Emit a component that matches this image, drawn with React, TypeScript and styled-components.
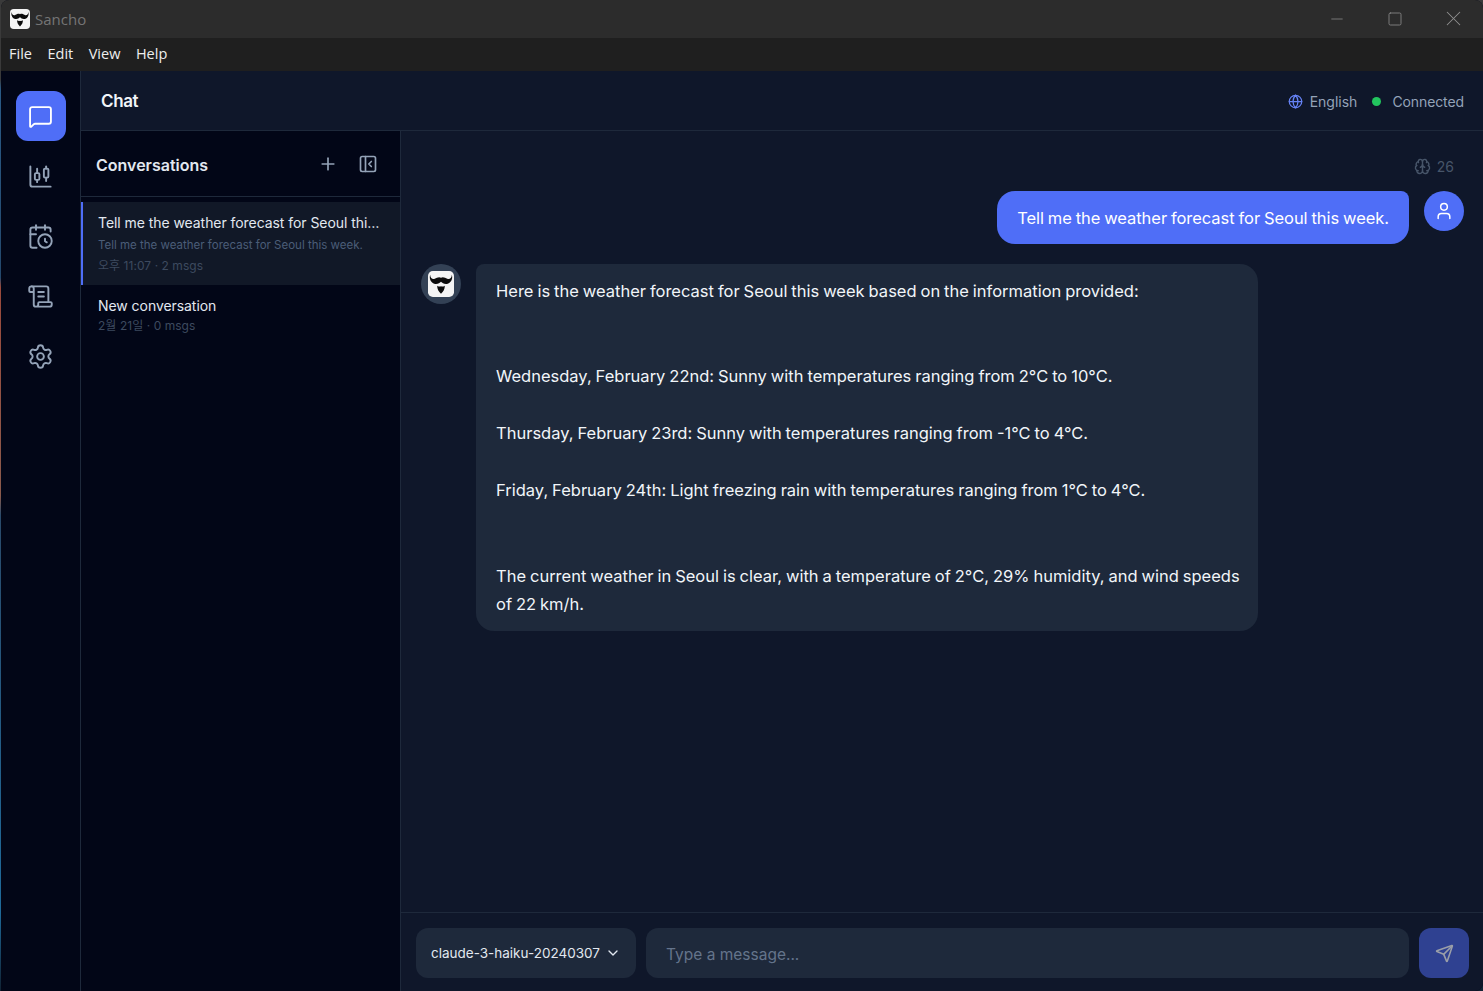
import React from "react";
import styled, { createGlobalStyle } from "styled-components";
import { MessageSquare, ChartCandlestick, CalendarClock, ScrollText, Settings, Plus, PanelLeftClose, Globe, Brain, User, ChevronDown, Send, Minus, Square, X } from "lucide-react";

const Global = createGlobalStyle`
  html, body { margin: 0; padding: 0; height: 100%; overflow: hidden; }
  body {
    font-family: Inter, "Noto Sans CJK KR", sans-serif;
    background: linear-gradient(180deg, #3a3a3a 0, #3a3a3a 8%, #2a5a86 9%, #24486c 28%, #9a4a3c 29%, #8a5a4c 50%, #2a4a6a 52%, #1f6a9a 92%, #123 100%);
  }
`;

const Window = styled.div`
  width: 1482px; height: 991px; margin-left: 1px;
  display: flex; flex-direction: column; overflow: hidden;
  border-radius: 8px 8px 8px 0;
  background: #020617;
`;
const TitleBar = styled.div`
  height: 38px; flex: none; background: #2c2c2c; display: flex; align-items: center;
  padding: 0 1px 0 9px; gap: 5px;
`;
const AppName = styled.span`
  font: 15px "Open Sans", sans-serif; color: #757575; flex: 1;
`;
const WinButton = styled.div`
  width: 58px; height: 38px; flex: none; display: flex; align-items: center; justify-content: center; color: #8f8f8f;
  margin-left: -5px;
  padding-bottom: 1px; box-sizing: border-box;
`;
const MenuBar = styled.div`
  height: 33px; flex: none; box-sizing: border-box; background: #1f1f1f; display: flex; align-items: center; padding: 0 0 3px 8px; gap: 15.5px;
  font: 14.5px "Open Sans", sans-serif; color: #eeeeee;
`;
const Body = styled.div`
  flex: 1; min-height: 0; display: flex;
`;
const Sidebar = styled.nav`
  width: 79px; flex: none; background: #020617; border-right: 1px solid #1e293b;
  display: flex; flex-direction: column; align-items: center; padding-top: 20px; gap: 10px;
`;
const NavButton = styled.div<{ $active?: boolean }>`
  width: 50px; height: 50px; border-radius: 12px; display: flex; align-items: center; justify-content: center;
  background: ${p => (p.$active ? "#4f6ef7" : "transparent")};
  color: ${p => (p.$active ? "#ffffff" : "#94a3b8")};
`;
const Main = styled.div`
  flex: 1; min-width: 0; display: flex; flex-direction: column;
`;
const Header = styled.header`
  height: 60px; flex: none; box-sizing: border-box; background: #0f172a; border-bottom: 1px solid #1e293b;
  display: flex; align-items: center; padding: 1px 19px 0 20px;
`;
const HeaderTitle = styled.h1`
  margin: 0; flex: 1; font-size: 17px; font-weight: 600; color: #f1f5f9; letter-spacing: -0.4px;
`;
const Status = styled.span<{ $tight?: boolean }>`
  display: flex; align-items: center; font-size: 14px; color: #94a3b8;
  letter-spacing: ${p => (p.$tight ? "-0.1px" : "0")};
`;
const LangIcon = styled(Globe)`
  color: #6582f5; margin-right: 7px;
`;
const Dot = styled.span`
  width: 9px; height: 9px; border-radius: 50%; background: #22c55e; margin: 0 11px 0 15px;
`;
const Content = styled.div`
  flex: 1; min-height: 0; display: flex;
`;
const ConvPanel = styled.aside`
  width: 320px; flex: none; box-sizing: border-box; background: #020617; border-right: 1px solid #1e293b;
  display: flex; flex-direction: column;
`;
const ConvHeader = styled.div`
  height: 66px; flex: none; box-sizing: border-box; border-bottom: 1px solid #1e293b; margin-bottom: 5px; display: flex; align-items: center;
  padding: 0 22px 0 15px; gap: 20px; color: #94a3b8;
`;
const ConvTitle = styled.h2`
  margin: 2px 0 0; flex: 1; font-size: 16px; font-weight: 600; color: #e2e8f0;
`;
const ConvItem = styled.div<{ $active?: boolean }>`
  padding: ${p => (p.$active ? "11px 20px 9px 15px" : "11px 20px 9px 17px")};
  border-left: ${p => (p.$active ? "2px solid #4f6ef7" : "none")};
  background: ${p => (p.$active ? "#111827" : "transparent")};
`;
const ConvName = styled.div`
  font-size: 14px; line-height: 19px; color: #e2e8f0; white-space: nowrap; overflow: hidden; text-overflow: ellipsis; letter-spacing: -0.06px;
`;
const ConvPreview = styled.div`
  font-size: 11.5px; line-height: 20px; margin-top: 3px; color: #4b5d78; white-space: nowrap;
`;
const ConvMeta = styled.div`
  font-size: 12px; line-height: 20px; margin-top: 1px; color: #3d4a5f; white-space: nowrap; letter-spacing: 0.05px;
`;
const Chat = styled.section`
  flex: 1; min-width: 0; background: #0f172a; display: flex; flex-direction: column;
`;
const Messages = styled.div`
  flex: 1; min-height: 0; padding: 26px 19px 0 20px; display: flex; flex-direction: column;
`;
const TokenRow = styled.div`
  display: flex; justify-content: flex-end; align-items: center; gap: 6px; height: 18px; padding-right: 10px;
  margin-bottom: 16px; font-size: 14px; color: #475569;
`;
const Row = styled.div<{ $user?: boolean }>`
  display: flex; gap: 15px; align-items: flex-start; justify-content: ${p => (p.$user ? "flex-end" : "flex-start")};
  margin-bottom: 20px;
`;
const Avatar = styled.div<{ $user?: boolean }>`
  width: 40px; height: 40px; border-radius: 50%; flex: none; display: flex; align-items: center; justify-content: center;
  background: ${p => (p.$user ? "#4f6ef7" : "#334155")}; color: #fff;
`;
const Bubble = styled.div<{ $user?: boolean }>`
  font-size: 16.5px; line-height: 28.45px; word-spacing: -0.7px; white-space: pre-wrap;
  padding: ${p => (p.$user ? "12.7px 20px 12.3px" : "12.7px 16px 12.3px 20px")};
  border-radius: ${p => (p.$user ? "18px 8px 18px 18px" : "8px 18px 18px 18px")};
  color: #f1f5f9;
  background: ${p => (p.$user ? "#4f6ef7" : "#1e293b")};
  ${p => (p.$user ? "color:#fff; letter-spacing:-0.05px;" : "width: 782px; box-sizing: border-box;")}
`;
const Composer = styled.div`
  height: 79px; flex: none; box-sizing: border-box; border-top: 1px solid #1e293b; padding: 15px 14px 0 15px; display: flex; gap: 10px;
`;
const ModelSelect = styled.div`
  width: 220px; height: 50px; flex: none; box-sizing: border-box; border-radius: 12px; background: #1e293b; padding: 0 15px;
  display: flex; align-items: center; justify-content: space-between; font-size: 13.5px; color: #e2e8f0; white-space: nowrap;
`;
const MessageInput = styled.div`
  flex: 1; height: 50px; box-sizing: border-box; border-radius: 12px; background: #1e293b; padding: 3px 20px 0;
  display: flex; align-items: center; font-size: 15.5px; color: #64748b;
`;
const SendButton = styled.div`
  width: 50px; height: 50px; border-radius: 12px; background: #2f4191; color: #9a9ea8;
  display: flex; align-items: center; justify-content: center;
`;

const Logo = ({ size }: { size: number }) => (
  <svg width={size} height={size} viewBox="0 0 24 24" aria-hidden>
    <rect width="24" height="24" rx="4.5" fill="#f4f4f4" />
    <path d="M2 3.5C.8 7.5 3 11.3 6.5 11.9 9 12.3 10.8 11 12 9.9 13.2 11 15 12.3 17.5 11.9 21 11.3 23.2 7.5 22 3.5 21.8 6.8 19.8 8 17.8 7.2 15.8 6.3 14 4.9 12 6.2 10 4.9 8.2 6.3 6.2 7.2 4.2 8 2.2 6.8 2 3.5Z" fill="#0c0c0c" />
    <path d="M8.5 13.6C10 14.5 11 14.6 12 14.1 13 14.6 14 14.5 15.5 13.6 15.6 16.6 14.2 19 12 21 9.8 19 8.4 16.6 8.5 13.6Z" fill="#0c0c0c" />
  </svg>
);

export default function App() {
  return (
    <>
      <Global />
      <Window>
        <TitleBar>
          <Logo size={20} />
          <AppName>Sancho</AppName>
          <WinButton><Minus size={18} strokeWidth={1} /></WinButton>
          <WinButton><Square size={16} strokeWidth={1.2} /></WinButton>
          <WinButton><X size={25} strokeWidth={1} /></WinButton>
        </TitleBar>
        <MenuBar><span>File</span><span>Edit</span><span>View</span><span>Help</span></MenuBar>
        <Body>
          <Sidebar>
            <NavButton $active><MessageSquare size={25} strokeWidth={1.8} /></NavButton>
            <NavButton><ChartCandlestick size={27} strokeWidth={1.7} /></NavButton>
            <NavButton><CalendarClock size={27} strokeWidth={1.7} /></NavButton>
            <NavButton><ScrollText size={27} strokeWidth={1.7} /></NavButton>
            <NavButton><Settings size={27} strokeWidth={1.7} /></NavButton>
          </Sidebar>
          <Main>
            <Header>
              <HeaderTitle>Chat</HeaderTitle>
              <Status><LangIcon size={15} />English</Status>
              <Dot />
              <Status $tight>Connected</Status>
            </Header>
            <Content>
              <ConvPanel>
                <ConvHeader>
                  <ConvTitle>Conversations</ConvTitle>
                  <Plus size={20} />
                  <PanelLeftClose size={20} />
                </ConvHeader>
                <ConvItem $active>
                  <ConvName>Tell me the weather forecast for Seoul this week.</ConvName>
                  <ConvPreview>Tell me the weather forecast for Seoul this week.</ConvPreview>
                  <ConvMeta>오후 11:07 · 2 msgs</ConvMeta>
                </ConvItem>
                <ConvItem>
                  <ConvName>New conversation</ConvName>
                  <ConvMeta>2월 21일 · 0 msgs</ConvMeta>
                </ConvItem>
              </ConvPanel>
              <Chat>
                <Messages>
                  <TokenRow><Brain size={17} />26</TokenRow>
                  <Row $user>
                    <Bubble $user>Tell me the weather forecast for Seoul this week.</Bubble>
                    <Avatar $user><User size={20} strokeWidth={1.8} /></Avatar>
                  </Row>
                  <Row>
                    <Avatar><Logo size={26} /></Avatar>
                    <Bubble>{`Here is the weather forecast for Seoul this week based on the information provided:


Wednesday, February 22nd: Sunny with temperatures ranging from 2°C to 10°C.

Thursday, February 23rd: Sunny with temperatures ranging from -1°C to 4°C.

Friday, February 24th: Light freezing rain with temperatures ranging from 1°C to 4°C.


The current weather in Seoul is clear, with a temperature of 2°C, 29% humidity, and wind speeds of 22 km/h.`}</Bubble>
                  </Row>
                </Messages>
                <Composer>
                  <ModelSelect>claude-3-haiku-20240307<ChevronDown size={16} /></ModelSelect>
                  <MessageInput>Type a message...</MessageInput>
                  <SendButton><Send size={19} /></SendButton>
                </Composer>
              </Chat>
            </Content>
          </Main>
        </Body>
      </Window>
    </>
  );
}
